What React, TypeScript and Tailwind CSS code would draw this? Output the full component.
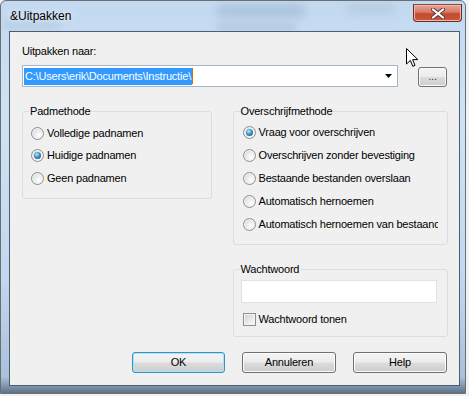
import React from "react";

function Radio({ checked, label }: { checked?: boolean; label: string }) {
  return (
    <div className="flex items-center gap-[3px] h-full">
      <span className="w-[13px] h-[13px] shrink-0 rounded-full border border-[#8c8f93] bg-[radial-gradient(circle_at_65%_65%,#ffffff_0%,#e6e6e6_55%,#c4c4c4_100%)] flex items-center justify-center shadow-[inset_0_0_0_1px_#f4f4f4]">
        {checked && (
          <span className="w-[7px] h-[7px] rounded-full bg-[radial-gradient(circle_at_40%_35%,#b9ecff_0%,#3f93c9_45%,#0f3e6b_100%)]" />
        )}
      </span>
      <span className="whitespace-nowrap">{label}</span>
    </div>
  );
}

function Btn({ label, def, w }: { label: string; def?: boolean; w: string }) {
  return (
    <div
      className={
        "h-[21px] rounded-[3px] border flex items-center justify-center text-black bg-[linear-gradient(#f4f4f4_0%,#ececec_48%,#dcdcdc_52%,#cdcdcd_100%)] " +
        w +
        (def
          ? " border-[#3c8fc2] shadow-[inset_0_0_0_1px_#a8e4fa]"
          : " border-[#707070] shadow-[inset_0_0_0_1px_#fbfbfb]")
      }
    >
      {label}
    </div>
  );
}

export default function App() {
  return (
    <div className="w-[469px] h-[396px] bg-[#f2f2f2] relative overflow-hidden font-['Liberation_Sans',Arial,sans-serif]">
      <div className="w-[466px] h-[394px] border border-[#6a6f75] rounded-t-[6px] bg-[linear-gradient(180deg,#c3d9f0_0%,#cfe2f5_30%,#c2d8ee_70%,#a9c1d9_96%,#5f7288_100%)] flex flex-col pl-[8px] pr-[5px] pb-[7px] relative">
        {/* title bar */}
        <div className="h-[30px] shrink-0 relative -ml-[8px] -mr-[5px] pl-[9px] pt-[7px] text-[12px] leading-[16px] text-black overflow-hidden">
          <div className="absolute left-[215px] top-[3px] w-[90px] h-[14px] rounded-full bg-[#a3bcd6] blur-[4px] opacity-70" />
          <div className="absolute left-[215px] top-[22px] w-[80px] h-[8px] rounded-full bg-[#abc2da] blur-[3px] opacity-70" />
          <div className="absolute left-[345px] top-[2px] w-[50px] h-[12px] rounded-full bg-[#b3c9e0] blur-[4px] opacity-70" />
          <div className="absolute left-[0px] top-[18px] w-[60px] h-[12px] rounded-full bg-[#b2c8de] blur-[4px] opacity-60" />
          <span className="relative [text-shadow:0_0_6px_#ffffff]">&amp;Uitpakken</span>
          <div className="absolute right-[3px] top-[3px] w-[49px] h-[18px] rounded-b-[4px] border border-[#6e2a22] border-t-[#8a4a42] bg-[linear-gradient(180deg,#e7a596_0%,#d67a66_45%,#c04a32_55%,#c9583c_100%)] shadow-[inset_0_0_0_1px_#efb8aa] flex items-center justify-center">
            <svg width="14" height="11" viewBox="0 0 14 11">
              <path
                d="M2 1.5 L12 9.5 M12 1.5 L2 9.5"
                stroke="#5a3b36"
                strokeWidth="4"
                strokeLinecap="round"
              />
              <path
                d="M2 1.5 L12 9.5 M12 1.5 L2 9.5"
                stroke="#ffffff"
                strokeWidth="2.2"
                strokeLinecap="round"
              />
            </svg>
          </div>
        </div>

        {/* client area */}
        <div className="flex-1 border border-[#4c5d70] bg-[#f0f0f0] flex flex-col pl-[12px] pr-[12px] pt-[12px] text-[11px] leading-[15px] tracking-[-0.2px] text-black relative">
          <div>Uitpakken naar:</div>
          <div className="flex items-start mt-[6px]">
            <div className="w-[377px] h-[22px] border border-[#a5b6c8] bg-white flex items-center pl-[1px] pr-[2px]">
              <div className="flex-1 h-[17px] flex items-center">
                <span className="bg-[#3399ff] text-white h-[17px] leading-[17px] pl-[1px] pr-[1px]">
                  C:\Users\erik\Documents\Instructie\
                </span>
                <span className="w-[1px] h-[16px] bg-[#c7720e]" />
              </div>
              <svg width="7" height="4" viewBox="0 0 7 4" className="mr-[3px]">
                <path d="M0 0 H7 L3.5 4 Z" fill="#000" />
              </svg>
            </div>
            <div className="ml-[20px] mt-[2px] w-[29px] h-[20px] rounded-[3px] border border-[#707070] shadow-[inset_0_0_0_1px_#fbfbfb] bg-[linear-gradient(#f4f4f4_0%,#ececec_48%,#dcdcdc_52%,#cdcdcd_100%)] flex items-center justify-center text-[#3a3a8a] leading-none pb-[2px]">
              ...
            </div>
          </div>

          <div className="flex items-start mt-[17px] gap-[21px]">
            <fieldset className="w-[190px] min-w-0 border border-[#d5dfe5] rounded-[3px] pl-[8px] pr-[6px] pt-[3px] pb-[8px]">
              <legend className="px-[1px] -ml-[2px] leading-[15px]">Padmethode</legend>
              <div className="h-[22.5px]">
                <Radio label="Volledige padnamen" />
              </div>
              <div className="h-[22.5px]">
                <Radio checked label="Huidige padnamen" />
              </div>
              <div className="h-[22.5px]">
                <Radio label="Geen padnamen" />
              </div>
            </fieldset>

            <div className="w-[215px] min-w-0 flex flex-col">
              <fieldset className="w-[215px] min-w-0 border border-[#d5dfe5] rounded-[3px] pl-[9px] pr-[9px] pt-[2px] pb-[8px]">
                <legend className="px-[1px] -ml-[3px] leading-[15px]">Overschrijfmethode</legend>
                <div className="h-[23px] w-full overflow-hidden">
                  <Radio checked label="Vraag voor overschrijven" />
                </div>
                <div className="h-[23px] w-full overflow-hidden">
                  <Radio label="Overschrijven zonder bevestiging" />
                </div>
                <div className="h-[23px] w-full overflow-hidden">
                  <Radio label="Bestaande bestanden overslaan" />
                </div>
                <div className="h-[23px] w-full overflow-hidden">
                  <Radio label="Automatisch hernoemen" />
                </div>
                <div className="h-[23px] w-full overflow-hidden">
                  <Radio label="Automatisch hernoemen van bestaande" />
                </div>
              </fieldset>

              <fieldset className="w-[215px] min-w-0 mt-[17px] border border-[#d5dfe5] rounded-[3px] pl-[7px] pr-[10px] pt-[3px] pb-[6px]">
                <legend className="px-[1px] -ml-[1px] leading-[15px]">Wachtwoord</legend>
                <div className="h-[23px] border border-[#dfe3e8] bg-white" />
                <div className="h-[22px] mt-[5px] flex items-center gap-[3px] pl-[2px]">
                  <span className="w-[13px] h-[13px] border border-[#8c8f93] bg-[linear-gradient(135deg,#d0d0d0_0%,#ececec_60%,#fafafa_100%)] shadow-[inset_0_0_0_1px_#f4f4f4]" />
                  <span>Wachtwoord tonen</span>
                </div>
              </fieldset>
            </div>
          </div>

          <div className="flex justify-end gap-[17px] mt-[15px]">
            <Btn label="OK" def w="w-[93px]" />
            <Btn label="Annuleren" w="w-[94px]" />
            <Btn label="Help" w="w-[94px]" />
          </div>
        </div>
      </div>

      {/* mouse cursor */}
      <svg
        className="absolute left-[406px] top-[48px]"
        width="13"
        height="20"
        viewBox="0 0 13 20"
      >
        <path
          d="M0.5 0.5 L0.5 16 L4.3 12.4 L6.8 18.3 L9 17.3 L6.6 11.6 L11.8 11.6 Z"
          fill="#ffffff"
          stroke="#000000"
          strokeWidth="1"
          strokeLinejoin="miter"
        />
      </svg>
    </div>
  );
}
